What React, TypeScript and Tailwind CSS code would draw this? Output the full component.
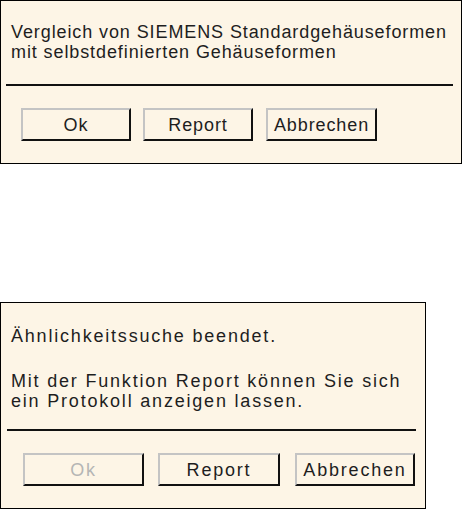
import type { ReactNode } from 'react';

const font = { fontFamily: '"Liberation Sans", Arial, sans-serif' };

function Button({ children, className, disabled }: { children: ReactNode; className: string; disabled?: boolean }) {
  return (
    <div
      className={
        'flex h-[33px] items-center justify-center border-2 border-t-[#c4c4c4] border-l-[#c4c4c4] border-b-[#111] border-r-[#111] bg-[#fdf5e6] ' +
        (disabled ? 'text-[#b5b5b5] ' : 'text-[#1e1e1e] ') +
        className
      }
    >
      {children}
    </div>
  );
}

export default function App() {
  return (
    <div className="flex w-[462px] flex-col bg-white" style={font}>
      {/* Vergleich dialog */}
      <div className="flex h-[164px] w-[462px] flex-col border border-black bg-[#fdf5e6] text-[18px] leading-[20px] tracking-[0.9px] text-[#1e1e1e]">
        <div className="pl-[10px] pt-[21px]">
          <p>Vergleich von SIEMENS Standardgehäuseformen</p>
          <p>mit selbstdefinierten Gehäuseformen</p>
        </div>
        <div className="ml-[5px] mr-[8px] mt-[22px] h-[2px] bg-[#111]" />
        <div className="mt-[22px] flex pl-[20px]">
          <Button className="w-[110px]">Ok</Button>
          <Button className="ml-[12px] w-[110px]">Report</Button>
          <Button className="ml-[13px] w-[111px]">Abbrechen</Button>
        </div>
      </div>

      {/* Ähnlichkeitssuche dialog */}
      <div className="mt-[138px] flex h-[207px] w-[426px] flex-col border border-black bg-[#fdf5e6] text-[18px] leading-[20px] tracking-[1.8px] text-[#1e1e1e]">
        <div className="pl-[10px] pt-[23px]">
          <p>Ähnlichkeitssuche beendet.</p>
          <p className="mt-[25px]">Mit der Funktion Report können Sie sich</p>
          <p>ein Protokoll anzeigen lassen.</p>
        </div>
        <div className="ml-[6px] mr-[9px] mt-[18px] h-[2px] bg-[#111]" />
        <div className="mt-[22px] flex pl-[22px]">
          <Button className="w-[121px]" disabled>
            Ok
          </Button>
          <Button className="ml-[14px] w-[122px]">Report</Button>
          <Button className="ml-[15px] w-[120px]">Abbrechen</Button>
        </div>
      </div>
    </div>
  );
}
